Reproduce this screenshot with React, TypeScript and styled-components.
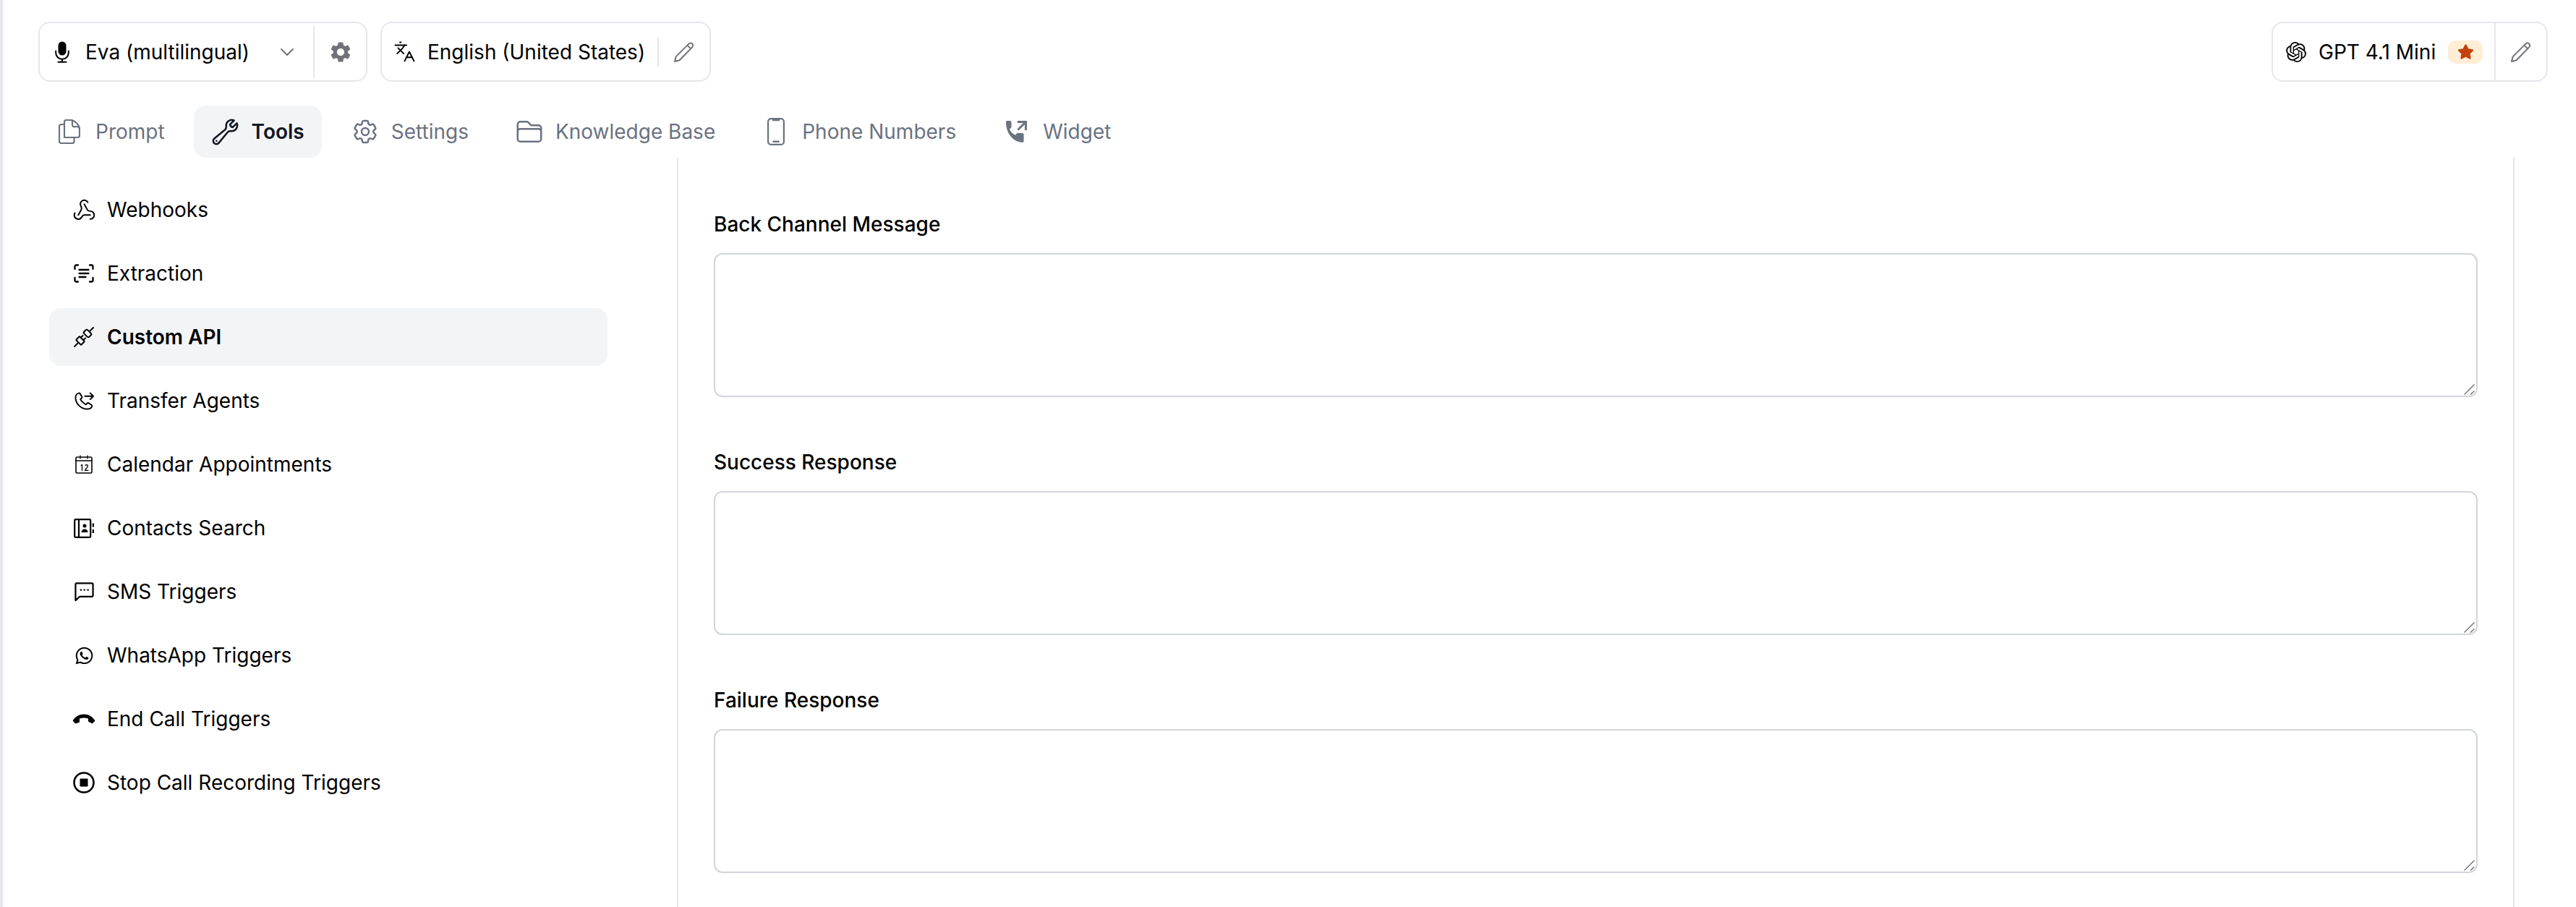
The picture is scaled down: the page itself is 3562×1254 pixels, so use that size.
import type { ReactNode } from "react"
import styled, { createGlobalStyle } from "styled-components"
import { ChevronDown, Languages, Webhook } from "lucide-react"
import { HiOutlineCog6Tooth, HiOutlineFolder, HiOutlineWrench } from "react-icons/hi2"
import { MdSettings } from "react-icons/md"
import { SiOpenai } from "react-icons/si"
import { FaStar, FaWhatsapp } from "react-icons/fa"

const GlobalStyle = createGlobalStyle`
  html, body {
    margin: 0;
    padding: 0;
    background: #fff;
  }
  * {
    box-sizing: border-box;
  }
  svg {
    flex: none;
    display: block;
  }
`

const Page = styled.div`
  width: 3562px;
  height: 1254px;
  overflow: hidden;
  display: flex;
  flex-direction: column;
  background: #fff;
  border-left: 4px solid #e5e7eb;
  font-family: Inter, "Liberation Sans", sans-serif;
  font-size: 28px;
  color: #000;
`

const TopBar = styled.div`
  display: flex;
  justify-content: space-between;
  padding: 30px 39px 0 49px;
`

const TopGroup = styled.div`
  display: flex;
  gap: 18px;
`

const Card = styled.div`
  display: flex;
  align-items: center;
  height: 83px;
  border: 2px solid #e5e7eb;
  border-radius: 16px;
`

const VoiceCell = styled.div`
  display: flex;
  align-items: center;
  flex: none;
  width: 378px;
  padding-left: 21px;
  gap: 22px;
`

const VoiceName = styled.span`
  flex: 1;
  white-space: nowrap;
`

const Chevron = styled(ChevronDown)`
  color: #71717a;
  margin-right: 20px;
`

const GearCell = styled.div`
  display: flex;
  align-items: center;
  justify-content: center;
  flex: none;
  width: 73px;
  height: 72px;
  color: #71717a;
  border-left: 2px solid #e5e7eb;
`

const LanguageCell = styled.div`
  display: flex;
  align-items: center;
  flex: none;
  width: 381px;
  padding-left: 16px;
  gap: 16px;
  white-space: nowrap;
`

const PencilCell = styled.div<{ $short?: boolean }>`
  display: flex;
  align-items: center;
  justify-content: center;
  flex: none;
  width: 72px;
  height: ${(p) => (p.$short ? "40px" : "100%")};
  color: #71717a;
  border-left: 2px solid #e5e7eb;
`

const ModelCell = styled.div`
  display: flex;
  align-items: center;
  flex: none;
  width: 306px;
  padding-left: 18px;
  gap: 17px;
  white-space: nowrap;
`

const StarBadge = styled.span`
  display: flex;
  align-items: center;
  justify-content: center;
  width: 48px;
  height: 32px;
  border-radius: 11px;
  background: #ffedd5;
  color: #c2410c;
`

const Tabs = styled.div`
  display: flex;
  gap: 16px;
  margin-top: 33px;
  padding-left: 48px;
`

const Tab = styled.div<{ $active?: boolean }>`
  display: flex;
  align-items: center;
  gap: 16px;
  height: 72px;
  padding: 0 24px;
  border-radius: 16px;
  white-space: nowrap;
  background: ${(p) => (p.$active ? "#f3f4f6" : "transparent")};
  color: ${(p) => (p.$active ? "#111827" : "#6b7280")};
  font-weight: ${(p) => (p.$active ? 600 : 400)};
`

const TabIcon = styled.span`
  display: flex;
  align-items: center;
  justify-content: center;
  flex: none;
  width: 40px;
  height: 40px;
`

const Body = styled.div`
  flex: 1;
  display: flex;
  margin-right: 85px;
  border-right: 2px solid #e5e7eb;
  min-height: 0;
`

const Sidebar = styled.nav`
  width: 934px;
  flex: none;
  display: flex;
  flex-direction: column;
  gap: 8px;
  padding: 32px 96px 0 64px;
  border-right: 2px solid #e5e7eb;
`

const SideItem = styled.div<{ $active?: boolean }>`
  display: flex;
  align-items: center;
  gap: 16px;
  flex: none;
  height: 80px;
  padding-left: 32px;
  border-radius: 16px;
  white-space: nowrap;
  background: ${(p) => (p.$active ? "#f3f4f6" : "transparent")};
  font-weight: ${(p) => (p.$active ? 600 : 400)};
`

const SideIcon = styled.span`
  display: flex;
  align-items: center;
  justify-content: center;
  width: 32px;
  height: 32px;
  flex: none;
`

const Main = styled.main`
  flex: 1;
  display: flex;
  flex-direction: column;
  gap: 71px;
  padding: 73px 49px 0 49px;
`

const Field = styled.div`
  display: flex;
  flex-direction: column;
  gap: 21px;
`

const Label = styled.label`
  font-weight: 500;
  line-height: 38px;
`

const TextAreaWrap = styled.div`
  position: relative;
  height: 199px;
`

const TextArea = styled.textarea`
  display: block;
  width: 100%;
  height: 100%;
  resize: none;
  border: 2px solid #d1d5db;
  border-radius: 12px;
  background: #fff;
  outline: none;
  font: inherit;
`

const Grip = styled.svg`
  position: absolute;
  right: 4px;
  bottom: 3px;
`

function Svg({ w, h, vb, children, fill = "none", stroke = "currentColor", sw = 1.5 }: { w: number; h: number; vb: string; children: ReactNode; fill?: string; stroke?: string; sw?: number }) {
  return (
    <svg width={w} height={h} viewBox={vb} fill={fill} stroke={stroke} strokeWidth={sw} strokeLinecap="round" strokeLinejoin="round">
      {children}
    </svg>
  )
}

const MicIcon = () => (
  <Svg w={20} h={30} vb="0 0 20 30" sw={2}>
    <rect x="4.5" y="0.5" width="11" height="19" rx="5.5" fill="currentColor" stroke="none" />
    <path d="M1.2 13.5v2.5a8.800 8.800 0 0 0 17.600 0v-2.500M10 24.800v4M4.500 28.800h11" />
  </Svg>
)

const PencilIcon = () => (
  <Svg w={30} h={30} vb="0 0 30 30" sw={2}>
    <path d="M2 28l1.600-6.600L21.400 3.600a3.300 3.300 0 0 1 4.900 4.500L8.600 26.200 2 28zM19.400 5.600l5 4.800" />
  </Svg>
)

const PromptIcon = () => (
  <Svg w={30} h={34} vb="0 0 30 34" sw={2.2}>
    <path d="M8 25V3.500A2.500 2.500 0 0 1 10.500 1H15c5 0 4 0 4 5.500S22 10 25 10s4 1.500 4 4v8.500a2.500 2.500 0 0 1-2.500 2.500H8z" />
    <path d="M18 1c6 2 9 5 11 11" />
    <path d="M8 7H3.500A2.500 2.500 0 0 0 1 9.500v21A2.500 2.500 0 0 0 3.500 33H19a2.500 2.500 0 0 0 2.500-2.500V25" />
  </Svg>
)

const PhoneIcon = () => (
  <Svg w={24} h={38} vb="0 0 24 38" sw={2.2}>
    <rect x="1.100" y="1.100" width="21.800" height="35.800" rx="4" />
    <path d="M8 3h8M8.500 32.800h7" strokeWidth="2.600" />
  </Svg>
)

const CallOutIcon = () => (
  <Svg w={30} h={30} vb="0 0 30 30" fill="currentColor" stroke="none">
    <path d="M1.500 0h3.800c1.300 0 2.200.9 2.200 2.200v6.300c0 1.100-.7 2-1.800 2.200l-.9.200c1.400 4.200 4.700 7.500 8.900 8.900l.2-.9c.3-1.100 1.100-1.800 2.200-1.800h6.300c1.300 0 2.200.9 2.200 2.200v9c0 .9-.6 1.500-1.400 1.500C10.500 29.800 0 18 0 1.500 0 .7.700 0 1.500 0z" />
    <path d="M16 1.500h11.500V13M27.500 1.500 16.500 12.500" fill="none" stroke="currentColor" strokeWidth="3" strokeLinecap="butt" strokeLinejoin="miter" />
  </Svg>
)

const ExtractionIcon = () => (
  <Svg w={28} h={26} vb="0 0 28 26" sw={2.300}>
    <path d="M6 1.500H3.500a2 2 0 0 0-2 2V7M22 1.500h2.500a2 2 0 0 1 2 2V7M6 24.500H3.500a2 2 0 0 1-2-2V19M22 24.500h2.500a2 2 0 0 0 2-2V19M7.500 8h13M7.500 13h13M7.500 18h9" />
  </Svg>
)

const PlugIcon = () => (
  <Svg w={28} h={28} vb="0 0 28 28" sw={2}>
    <path d="M1 27l5.500-5.500M27 1l-5 5" />
    <rect x="-3.500" y="-5" width="7" height="10" rx="1" transform="translate(9 19) rotate(-45)" />
    <rect x="-3.500" y="-5" width="7" height="10" rx="2" transform="translate(19 9) rotate(-45)" />
    <path d="M-3.600-2.500h4M-3.600 2.500h4" transform="translate(14 14) rotate(-45)" />
  </Svg>
)

const TransferIcon = () => (
  <Svg w={27} h={26} vb="0 0 28 27" sw={2}>
    <path d="M7 2.500c-3 .500-5.500 3-5.500 6.500 0 9 8 16.500 17 16.500 3 0 5-1 6.500-3.500.400-.800.200-1.700-.500-2.200l-4-2.800c-.800-.500-1.800-.400-2.400.300l-1.600 1.700C13 17 10 14.500 8.500 11.500l1.700-1.600c.700-.600.800-1.600.300-2.400L8 3.500c-.200-.500-.500-.900-1-1z" />
    <path d="M15 7h12M22.500 2.500 27 7l-4.500 4.500" />
  </Svg>
)

const CalendarIcon = () => (
  <Svg w={24} h={26} vb="0 0 24 26" sw={1.600}>
    <rect x="1" y="3" width="22" height="22" rx="1.500" />
    <path d="M1 8h22M7 1v4M17 1v4M8 14.500l1.500-1v8M14 14.500c.300-1 3.500-1.500 3.500.800 0 2-3.500 4-4 6h4.500" strokeWidth="1.300" />
  </Svg>
)

const ContactsIcon = () => (
  <Svg w={28} h={27} vb="0 0 28 27" sw={2.200}>
    <rect x="1.200" y="1.200" width="22" height="24.600" rx="1.500" />
    <path d="M7 1.500v24" />
    <circle cx="15" cy="10" r="2.500" fill="currentColor" stroke="none" />
    <path d="M10.500 19c0-6 9-6 9 0z" fill="currentColor" stroke="none" />
    <path d="M26.800 6.500v5M26.800 15v5" strokeLinecap="butt" />
  </Svg>
)

const SmsIcon = () => (
  <Svg w={27} h={27} vb="0 0 28 28" sw={2.300}>
    <path d="M1.500 26V3a1.500 1.500 0 0 1 1.500-1.500h22A1.500 1.500 0 0 1 26.500 3v16a1.500 1.500 0 0 1-1.500 1.500H7.500z" />
    <path d="M9 11h.500M14 11h.500M19 11h.500" strokeWidth="2.400" />
  </Svg>
)

const EndCallIcon = () => (
  <Svg w={32} h={14} vb="0 0 32 14" fill="currentColor" stroke="none">
    <path d="M.500 9.500C4 3.500 10 .500 16 .500s12 3 15.500 9l-3.800 4-5.700-3V6.500c-4-1.500-8-1.500-12 0v5l-5.700 2z" />
  </Svg>
)

const StopIcon = () => (
  <Svg w={30} h={30} vb="0 0 30 30" sw={2.600}>
    <circle cx="15" cy="15" r="13.500" />
    <rect x="9.500" y="9.500" width="11" height="11" rx="1" fill="currentColor" stroke="none" />
  </Svg>
)

const sideItems: { label: string; icon: ReactNode; active?: boolean }[] = [
  { label: "Webhooks", icon: <Webhook size={33} strokeWidth={1.45} /> },
  { label: "Extraction", icon: <ExtractionIcon /> },
  { label: "Custom API", icon: <PlugIcon />, active: true },
  { label: "Transfer Agents", icon: <TransferIcon /> },
  { label: "Calendar Appointments", icon: <CalendarIcon /> },
  { label: "Contacts Search", icon: <ContactsIcon /> },
  { label: "SMS Triggers", icon: <SmsIcon /> },
  { label: "WhatsApp Triggers", icon: <FaWhatsapp size={27} /> },
  { label: "End Call Triggers", icon: <EndCallIcon /> },
  { label: "Stop Call Recording Triggers", icon: <StopIcon /> },
]

const tabs: { label: string; icon: ReactNode; active?: boolean }[] = [
  { label: "Prompt", icon: <PromptIcon /> },
  { label: "Tools", icon: <HiOutlineWrench size={41} />, active: true },
  { label: "Settings", icon: <HiOutlineCog6Tooth size={40} /> },
  { label: "Knowledge Base", icon: <HiOutlineFolder size={40} /> },
  { label: "Phone Numbers", icon: <PhoneIcon /> },
  { label: "Widget", icon: <CallOutIcon /> },
]

const fields = ["Back Channel Message", "Success Response", "Failure Response"]

export default function App() {
  return (
    <Page>
      <GlobalStyle />
      <TopBar>
        <TopGroup>
          <Card>
            <VoiceCell>
              <MicIcon />
              <VoiceName>Eva (multilingual)</VoiceName>
              <Chevron size={32} strokeWidth={1.5} />
            </VoiceCell>
            <GearCell>
              <MdSettings size={34} />
            </GearCell>
          </Card>
          <Card>
            <LanguageCell>
              <Languages size={31} strokeWidth={1.5} />
              English (United States)
            </LanguageCell>
            <PencilCell $short>
              <PencilIcon />
            </PencilCell>
          </Card>
        </TopGroup>
        <Card>
          <ModelCell>
            <SiOpenai size={28} />
            GPT 4.1 Mini
            <StarBadge>
              <FaStar size={23} />
            </StarBadge>
          </ModelCell>
          <PencilCell>
            <PencilIcon />
          </PencilCell>
        </Card>
      </TopBar>
      <Tabs>
        {tabs.map((t) => (
          <Tab key={t.label} $active={t.active}>
            <TabIcon>{t.icon}</TabIcon>
            {t.label}
          </Tab>
        ))}
      </Tabs>
      <Body>
        <Sidebar>
          {sideItems.map((s) => (
            <SideItem key={s.label} $active={s.active}>
              <SideIcon>{s.icon}</SideIcon>
              {s.label}
            </SideItem>
          ))}
        </Sidebar>
        <Main>
          {fields.map((f) => (
            <Field key={f}>
              <Label>{f}</Label>
              <TextAreaWrap>
                <TextArea />
                <Grip width="15" height="15" viewBox="0 0 15 15" fill="none" stroke="#6b6b6b" strokeWidth="1.300">
                  <path d="M0.500 14.500 14.500 0.500M9 14.500l5.500-5" />
                </Grip>
              </TextAreaWrap>
            </Field>
          ))}
        </Main>
      </Body>
    </Page>
  )
}
